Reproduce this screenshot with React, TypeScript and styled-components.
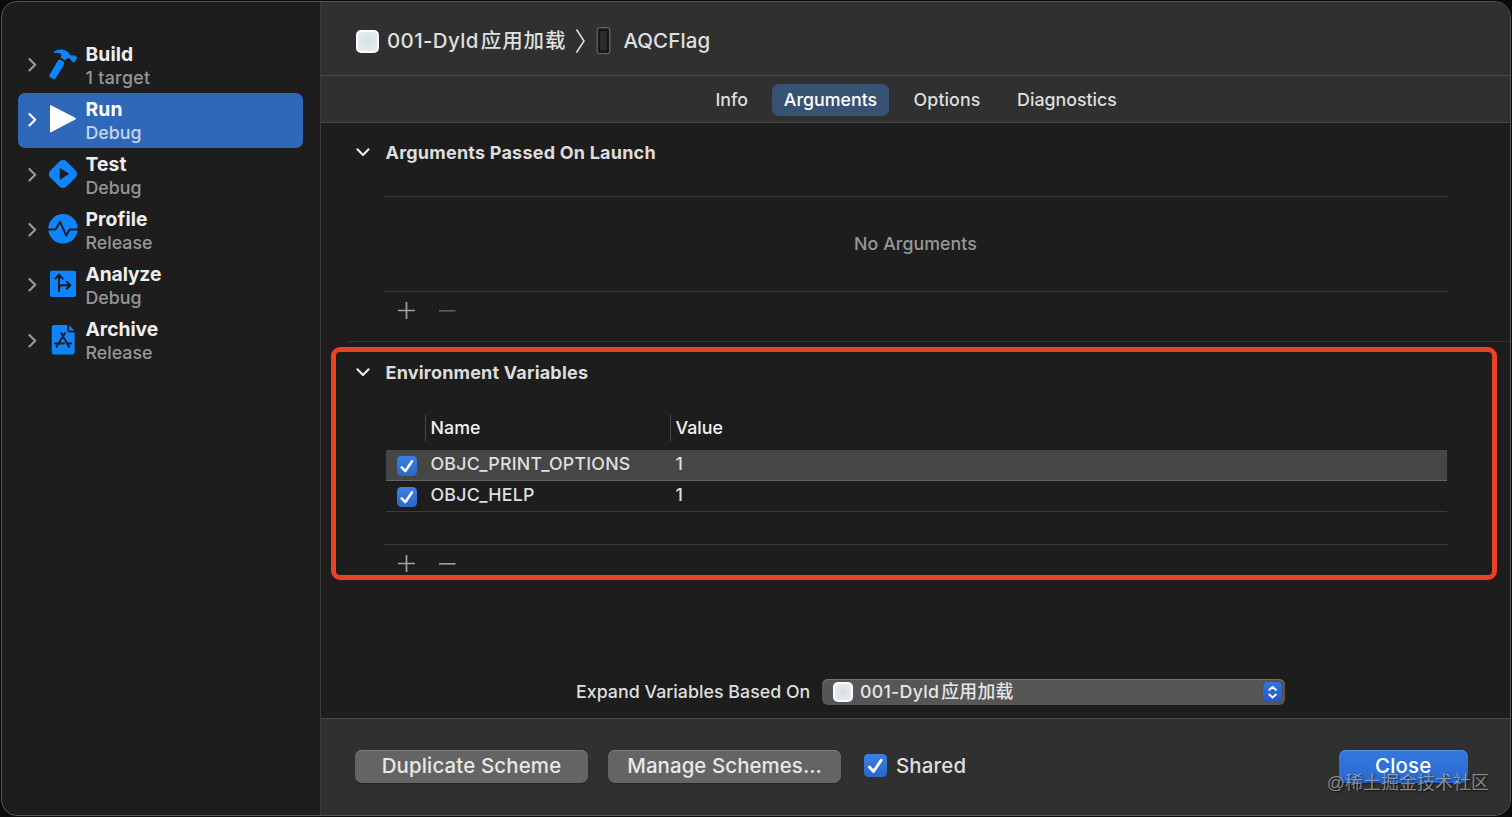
import React from "react";
import styled, { createGlobalStyle } from "styled-components";

const Global = createGlobalStyle`
  * { box-sizing: border-box; }
  body { margin: 0; background: #0b0b0b; overflow: hidden; }
  button { font: inherit; color: inherit; border: 0; background: none; padding: 0; }
`;

const Window = styled.div`
  position: relative;
  display: flex;
  width: 1510px;
  height: 815px;
  margin: 1px;
  border: 1px solid #555;
  border-radius: 16px;
  overflow: hidden;
  background: #1d1d1d;
  color: #dfdfdf;
  font-family: Inter, "Noto Sans CJK SC", sans-serif;
  font-size: 17.8px;
  font-weight: 450;
  line-height: 22px;
  white-space: nowrap;
`;

/* Text whose tracking differs from label to label */
const Label = styled.span<{ $ls?: number }>`
  letter-spacing: ${(p) => p.$ls ?? 0.2}px;
`;

const Sidebar = styled.nav`
  width: 319px;
  flex: none;
  padding: 35.5px 17px 0 16px;
  border-right: 1px solid #3b3b3b;
`;

const Action = styled.div<{ $selected?: boolean }>`
  display: grid;
  grid-template-columns: 11px 30px 1fr;
  column-gap: 10px;
  align-items: center;
  height: 55.1px;
  padding-left: 9px;
  border-radius: 7px;
  color: ${(p) => (p.$selected ? "#ffffff" : "#9a9a9a")};
  background: ${(p) => (p.$selected ? "#2f67b9" : "transparent")};
  svg { display: block; margin-top: -2px; }
`;

const ActionText = styled.div`
  display: flex;
  flex-direction: column;
  padding-top: 1px;
  margin-left: -2.5px;
`;

const ActionName = styled(Label)<{ $selected?: boolean }>`
  font-size: 19.3px;
  font-weight: 700;
  line-height: 23px;
  color: ${(p) => (p.$selected ? "#ffffff" : "#eeeeee")};
`;

const ActionDetail = styled(Label)<{ $selected?: boolean }>`
  line-height: 23px;
  color: ${(p) => (p.$selected ? "#c5d6ee" : "#969696")};
`;

const Main = styled.main`
  flex: 1;
  display: flex;
  flex-direction: column;
  min-width: 0;
`;

const Header = styled.header`
  display: flex;
  align-items: center;
  height: 74px;
  padding: 5px 0 0 35px;
  background: #303030;
  border-bottom: 1px solid #4a4a4a;
  font-size: 20.5px;
`;

const AppIcon = styled.span<{ $size: number; $gap: number }>`
  flex: none;
  width: ${(p) => p.$size}px;
  height: ${(p) => p.$size}px;
  margin-right: ${(p) => p.$gap}px;
  border-radius: 5px;
  border: 2px solid #fbfcfc;
  background: radial-gradient(circle, #d3dfe2 0, #e0e7e9 45%, #e9edee 100%);
`;

const Project = styled.span<{ $cjk: number }>`
  display: flex;
  align-items: center;
  span + span {
    margin-left: 2px;
    letter-spacing: ${(p) => p.$cjk}px;
  }
`;

const Tabs = styled.div`
  display: flex;
  align-items: center;
  justify-content: center;
  height: 47px;
  background: #303030;
  border-bottom: 1px solid #484848;
  font-weight: 500;
  padding: 1px 10.5px 0 0;
`;

const Tab = styled.button<{ $active?: boolean; $w: number }>`
  width: ${(p) => p.$w}px;
  height: 32px;
  border-radius: 7px;
  text-align: center;
  color: ${(p) => (p.$active ? "#ffffff" : "#dfdfdf")};
  background: ${(p) => (p.$active ? "#385273" : "transparent")};
`;

const Content = styled.div`
  flex: 1;
  display: flex;
  flex-direction: column;
  min-height: 0;
`;

const Section = styled.section<{ $h: number }>`
  height: ${(p) => p.$h}px;
  padding: 0 61px 0 63px;
`;

const SectionTitle = styled.h2<{ $h: number }>`
  display: flex;
  align-items: center;
  gap: 14.5px;
  height: ${(p) => p.$h}px;
  margin: 0 0 0 -29px;
  font-size: 18px;
  font-weight: 700;
  color: #dddddd;
  svg { display: block; margin-top: -2px; }
`;

const EmptyList = styled.div`
  display: flex;
  align-items: center;
  justify-content: center;
  height: 96px;
  margin-top: 14px;
  padding-right: 2px;
  border: solid #383838;
  border-width: 1px 0;
  color: #989898;
`;

const ListButtons = styled.div`
  display: flex;
  gap: 22px;
  padding: 8.5px 0 0 12.5px;
  svg { display: block; }
`;

const Divider = styled.hr`
  width: 1162px;
  height: 1px;
  margin: 0 0 0 27px;
  flex: none;
  border: 0;
  background: #343434;
`;

const Table = styled.div`
  height: 130px;
  margin-top: 12px;
  padding: 0 2px;
  border-bottom: 1px solid #383838;
`;

const columns = "39px 245px 1fr";

const TableHead = styled.div`
  display: grid;
  grid-template-columns: ${columns};
  height: 35px;
  font-weight: 500;
  color: #f2f2f2;
`;

const HeadCell = styled.div`
  height: 26px;
  padding: 2px 0 0 4.5px;
  border-left: 1px solid #464646;
`;

const TableRow = styled.div<{ $selected?: boolean }>`
  display: grid;
  grid-template-columns: ${columns};
  align-items: center;
  height: 31px;
  border-bottom: 1px solid ${(p) => (p.$selected ? "#656565" : "#3a3a3a")};
  background: ${(p) => (p.$selected ? "#464646" : "transparent")};
`;

const Cell = styled.div`
  padding: 0 0 2px 5.5px;
`;

const CheckCell = styled.div`
  padding: 1px 0 0 11px;
`;

const CheckBox = styled.span<{ $size: number }>`
  display: block;
  flex: none;
  width: ${(p) => p.$size}px;
  height: ${(p) => p.$size}px;
  border-radius: 4.5px;
  background: linear-gradient(#3b80e2, #2a68cb);
  svg { display: block; width: 100%; height: 100%; }
`;

const ExpandRow = styled.div`
  display: flex;
  align-items: center;
  margin-top: auto;
  padding: 0 0 13px 255px;
`;

const Popup = styled.button`
  display: flex;
  align-items: center;
  width: 463px;
  height: 26px;
  margin-left: auto;
  margin-right: 225px;
  padding: 0 3px 0 10.5px;
  border-radius: 6px;
  background: #565656;
  box-shadow: inset 0 1px 0 #717171;
  color: #e6e6e6;
`;

const Stepper = styled.span`
  width: 19px;
  height: 20px;
  margin-left: auto;
  border-radius: 4.5px;
  background: linear-gradient(#3573df, #2458c6);
  box-shadow: 0 0 1px #222;
  svg { display: block; }
`;

const Footer = styled.footer`
  display: flex;
  align-items: center;
  height: 97px;
  padding: 0 42px 1px 34px;
  background: #303030;
  border-top: 1px solid #484848;
  font-size: 20.4px;
`;

const PushButton = styled.button<{ $primary?: boolean }>`
  width: ${(p) => (p.$primary ? 129.5 : 233)}px;
  height: 33px;
  padding-bottom: 2px;
  border-radius: 7px;
  color: ${(p) => (p.$primary ? "#ffffff" : "#e8e8e8")};
  background: ${(p) => (p.$primary ? "linear-gradient(#3479df, #2b69cf)" : "#646464")};
  box-shadow: inset 0 1px 0 ${(p) => (p.$primary ? "#5590e6" : "#7d7d7d")}, 0 1px 1px #242424;
  & + & { margin-left: 20px; }
`;

const Shared = styled.label`
  display: flex;
  align-items: center;
  gap: 9px;
  margin: -2px auto 0 23px;
`;

const Watermark = styled.div`
  position: absolute;
  right: 21px;
  bottom: 20px;
  font-family: "Liberation Sans", "Noto Sans CJK SC", sans-serif;
  font-size: 18px;
  font-weight: 400;
  line-height: 24px;
  color: rgba(205, 205, 205, 0.6);
  text-shadow: 1px 1px 2px rgba(0, 0, 0, 0.7);
`;

const Highlight = styled.div`
  position: absolute;
  left: 329px;
  top: 345px;
  width: 1166px;
  height: 233px;
  border: 5px solid #e94327;
  border-radius: 9px;
  pointer-events: none;
`;

const blue = "#0f84ff";
const ink = "#1d1d1d";

const Chevron = () => (
  <svg width="11" height="16" viewBox="0 0 11 16" fill="none" stroke="currentColor" strokeWidth="2.1" strokeLinecap="round" strokeLinejoin="round">
    <path d="M2.4 3 L8.2 8.7 L2.4 14.4" />
  </svg>
);

const Disclosure = () => (
  <svg width="16" height="16" viewBox="0 0 16 16" fill="none" stroke="#ededed" strokeWidth="2.1" strokeLinecap="round" strokeLinejoin="round">
    <path d="M2.4 5.3 L8 11 L13.6 5.3" />
  </svg>
);

const Check = () => (
  <svg viewBox="0 0 20 20" fill="none" stroke="#fff" strokeWidth="2.5" strokeLinecap="round" strokeLinejoin="round">
    <path d="M4.7 11.3 L8.3 15.2 L14.9 5.4" />
  </svg>
);

const AddIcon = () => (
  <svg width="19" height="19" viewBox="0 0 19 19" stroke="#a3a3a3" strokeWidth="1.7">
    <path d="M1 9.5 H18 M9.5 1 V18" />
  </svg>
);

const RemoveIcon = ({ color }: { color: string }) => (
  <svg width="19" height="19" viewBox="0 0 19 19" stroke={color} strokeWidth="1.6">
    <path d="M1 9.8 H17.5" />
  </svg>
);

const Icon = ({ children }: { children: React.ReactNode }) => (
  <svg width="30" height="32" viewBox="0 0 30 32">{children}</svg>
);

const icons = {
  hammer: (
    <Icon>
      <path fill={blue} d="M6.2 3.6 C9 1.3 15 .8 18.6 3.2 C20.8 4.5 21.6 6 22.7 7.3 C23.9 7.8 25 6.8 26.3 7.3 L28.7 8.9 C29.2 9.4 29 10 28.7 10.6 L26.6 14 C26.1 14.7 25.5 14.5 25 14.1 L23 12.5 C22.6 11.8 22.8 11.2 21.9 10.6 C20 9.7 18.4 10.8 17.2 12.4 L12.6 9.6 C14 7.3 13.6 6.5 12.2 5.6 C10.4 4.5 8.5 4.8 6.6 5 C5.8 5.1 5.3 4.4 6.2 3.6 Z" />
      <path fill={blue} d="M11.6 11.2 L16 13.9 C16.5 16 15 18.2 13.8 20.5 L7.4 30.5 C6.8 31.3 6.2 31.4 5.4 30.9 L2 28.9 C1.2 28.4 1.1 27.7 1.5 26.9 L7.8 16.2 C9 14.2 9.7 12.3 11.6 11.2 Z" />
    </Icon>
  ),
  run: (
    <Icon>
      <path fill="#fff" stroke="#fff" strokeWidth="2" strokeLinejoin="round" d="M3 3.3 L26.8 15.7 L3 28.2 Z" />
    </Icon>
  ),
  test: (
    <Icon>
      <rect x="3.6" y="4.6" width="22.8" height="22.8" rx="5" fill={blue} transform="rotate(45 15 16)" />
      <path fill={ink} stroke={ink} strokeWidth="1" strokeLinejoin="round" d="M12.2 10.6 L20.5 15.8 L12.2 21.2 Z" />
    </Icon>
  ),
  profile: (
    <Icon>
      <circle cx="15" cy="15.8" r="14.7" fill={blue} />
      <path fill="none" stroke={ink} strokeWidth="2" strokeLinejoin="round" d="M0 16.4 H7.6 L12.1 8.8 L18.3 22.6 L21.6 16.4 H30" />
    </Icon>
  ),
  analyze: (
    <Icon>
      <rect x="2" y="2.8" width="26" height="26.2" rx="1.8" fill={blue} />
      <path fill="none" stroke={ink} strokeWidth="2" strokeLinecap="round" strokeLinejoin="round" d="M11 23.2 V6.9 M7.4 10.6 L11 6.6 L14.7 10.6 M11 20 C11.3 18 12.2 17.2 14 17.2 H22.3 M18.7 13.8 L22.4 17.2 L18.7 20.7" />
    </Icon>
  ),
  archive: (
    <Icon>
      <path fill={blue} d="M6 1 H19.2 V6.4 Q19.2 8.4 21.2 8.4 H26.6 V28.2 Q26.6 30.6 24.2 30.6 H6.2 Q3.8 30.6 3.8 28.2 V3.2 Q3.8 1 6 1 Z" />
      <path fill={blue} d="M21.2 1.2 L26.4 6.6 H21.7 Q21.2 6.6 21.2 6.1 Z" />
      <path fill="none" stroke={ink} strokeWidth="2" strokeLinecap="round" d="M13.3 9.2 L21 22.8 M16.8 9.2 L10 20.4 M7 19.5 H16 M20 19.5 H23 M8.6 22.8 L9 22.1" />
    </Icon>
  ),
};

const actions = [
  { name: "Build", detail: "1 target", icon: icons.hammer, ls: 0.1, dls: 0.3 },
  { name: "Run", detail: "Debug", icon: icons.run, ls: 0.2, dls: 0 },
  { name: "Test", detail: "Debug", icon: icons.test, ls: 0.1, dls: 0 },
  { name: "Profile", detail: "Release", icon: icons.profile, ls: 0.1, dls: 0 },
  { name: "Analyze", detail: "Debug", icon: icons.analyze, ls: -0.15, dls: 0 },
  { name: "Archive", detail: "Release", icon: icons.archive, ls: -0.05, dls: 0 },
];

const tabs = [
  { name: "Info", w: 80.5, ls: -0.05 },
  { name: "Arguments", w: 117, ls: 0, active: true },
  { name: "Options", w: 116, ls: 0.1 },
  { name: "Diagnostics", w: 124, ls: 0 },
];

const variables = [
  { name: "OBJC_PRINT_OPTIONS", value: "1", selected: true },
  { name: "OBJC_HELP", value: "1" },
];

export default function App() {
  return (
    <>
      <Global />
      <Window>
        <Sidebar>
          {actions.map((a) => {
            const selected = a.name === "Run";
            return (
              <Action key={a.name} $selected={selected}>
                <Chevron />
                {a.icon}
                <ActionText>
                  <ActionName $ls={a.ls} $selected={selected}>{a.name}</ActionName>
                  <ActionDetail $ls={a.dls} $selected={selected}>{a.detail}</ActionDetail>
                </ActionText>
              </Action>
            );
          })}
        </Sidebar>
        <Main>
          <Header>
            <AppIcon $size={23} $gap={8} />
            <Project $cjk={0.9}>
              <Label $ls={0.35}>001-Dyld</Label>
              <span>应用加载</span>
            </Project>
            <svg width="56" height="32" viewBox="0 0 56 32" fill="none">
              <path d="M10.5 4.5 L18 16 L10.5 27.5" stroke="#dcdcdc" strokeWidth="1.6" />
              <rect x="31.2" y="2.7" width="12.6" height="26" rx="2.4" fill="#1b1b1b" stroke="#777" />
              <rect x="33.3" y="5.5" width="8.4" height="20.5" fill="#2c2c2c" stroke="#111" />
            </svg>
            <Label $ls={0.1} style={{ marginLeft: 1 }}>AQCFlag</Label>
          </Header>
          <Tabs>
            {tabs.map((t) => (
              <Tab key={t.name} $w={t.w} $active={t.active}>
                <Label $ls={t.ls}>{t.name}</Label>
              </Tab>
            ))}
          </Tabs>
          <Content>
            <Section $h={218}>
              <SectionTitle $h={59}>
                <Disclosure />
                <Label $ls={0.22}>Arguments Passed On Launch</Label>
              </SectionTitle>
              <EmptyList>
                <Label $ls={0.05}>No Arguments</Label>
              </EmptyList>
              <ListButtons>
                <AddIcon />
                <RemoveIcon color="#5f5f5f" />
              </ListButtons>
            </Section>
            <Divider />
            <Section $h={240}>
              <SectionTitle $h={61}>
                <Disclosure />
                <Label $ls={0.2}>Environment Variables</Label>
              </SectionTitle>
              <Table>
                <TableHead>
                  <span />
                  <HeadCell><Label $ls={0.05}>Name</Label></HeadCell>
                  <HeadCell><Label $ls={0}>Value</Label></HeadCell>
                </TableHead>
                {variables.map((v) => (
                  <TableRow key={v.name} $selected={v.selected}>
                    <CheckCell><CheckBox $size={20}><Check /></CheckBox></CheckCell>
                    <Cell><Label $ls={0.22}>{v.name}</Label></Cell>
                    <Cell>{v.value}</Cell>
                  </TableRow>
                ))}
              </Table>
              <ListButtons>
                <AddIcon />
                <RemoveIcon color="#a3a3a3" />
              </ListButtons>
            </Section>
            <ExpandRow>
              <Label $ls={0.02}>Expand Variables Based On</Label>
              <Popup>
                <AppIcon $size={20} $gap={7.5} />
                <Project $cjk={0.35}>
                  <Label $ls={0.25}>001-Dyld</Label>
                  <span>应用加载</span>
                </Project>
                <Stepper>
                  <svg width="19" height="20" viewBox="0 0 19 20" fill="none" stroke="#fff" strokeWidth="2" strokeLinecap="round" strokeLinejoin="round">
                    <path d="M6.3 7.8 L9.6 4.9 L12.9 7.8 M6.3 12.6 L9.6 15.5 L12.9 12.6" />
                  </svg>
                </Stepper>
              </Popup>
            </ExpandRow>
          </Content>
          <Footer>
            <PushButton><Label $ls={0.17}>Duplicate Scheme</Label></PushButton>
            <PushButton><Label $ls={0.1}>Manage Schemes...</Label></PushButton>
            <Shared>
              <CheckBox $size={23}><Check /></CheckBox>
              <Label $ls={0.2}>Shared</Label>
            </Shared>
            <PushButton $primary><Label $ls={0.2}>Close</Label></PushButton>
          </Footer>
        </Main>
        <Highlight />
        <Watermark>@稀土掘金技术社区</Watermark>
      </Window>
    </>
  );
}
